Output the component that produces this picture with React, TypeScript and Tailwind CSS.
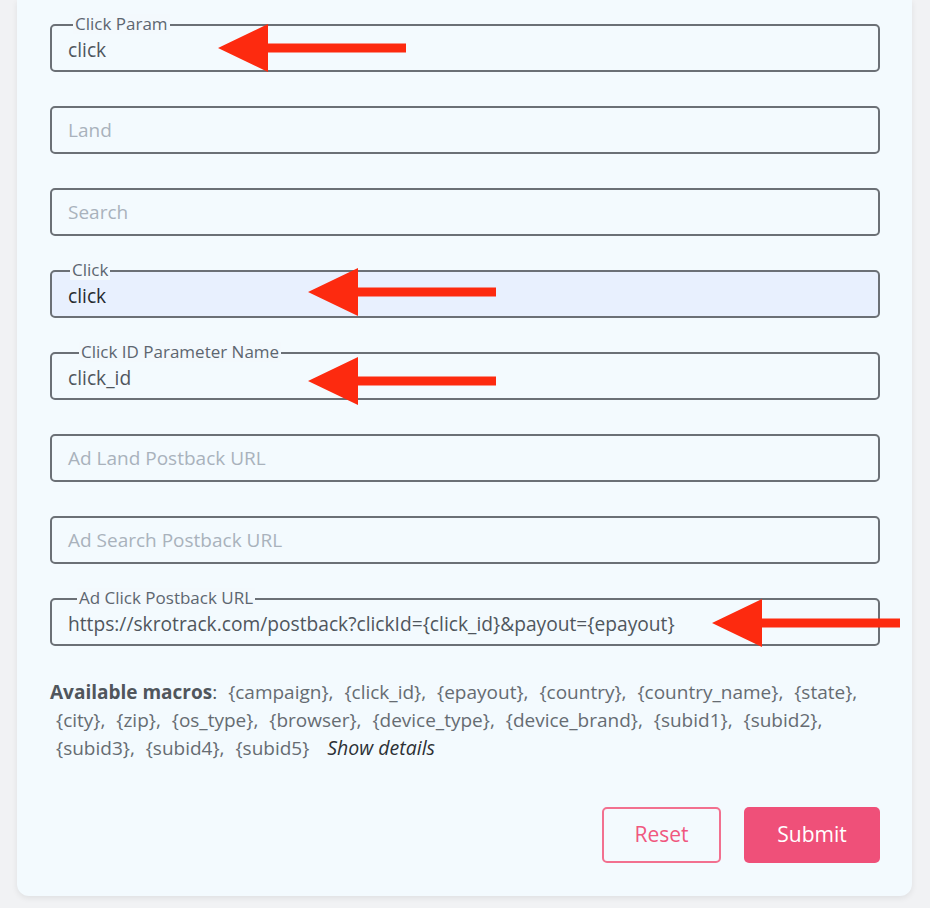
import React from 'react'

type Field = {
  label?: string
  placeholder: string
  value?: string
  autofill?: boolean
  labelLeft: string
}

const FIELDS: Field[] = [
  { label: 'Click Param', placeholder: 'Click Param', value: 'click', labelLeft: 'left-[21px]' },
  { placeholder: 'Land', labelLeft: 'left-[18px]' },
  { placeholder: 'Search', labelLeft: 'left-[18px]' },
  { label: 'Click', placeholder: 'Click', value: 'click', autofill: true, labelLeft: 'left-[18px]' },
  { label: 'Click ID Parameter Name', placeholder: 'Click ID Parameter Name', value: 'click_id', labelLeft: 'left-[27px]' },
  { placeholder: 'Ad Land Postback URL', labelLeft: 'left-[18px]' },
  { placeholder: 'Ad Search Postback URL', labelLeft: 'left-[18px]' },
  {
    label: 'Ad Click Postback URL',
    placeholder: 'Ad Click Postback URL',
    value: 'https://skrotrack.com/postback?clickId={click_id}&payout={epayout}',
    labelLeft: 'left-[25px]',
  },
]

const MACROS = [
  'campaign', 'click_id', 'epayout', 'country', 'country_name', 'state',
  'city', 'zip', 'os_type', 'browser', 'device_type', 'device_brand',
  'subid1', 'subid2', 'subid3', 'subid4', 'subid5',
]

function OutlinedField({ field }: { field: Field }) {
  return (
    <div
      className={`relative h-12 rounded-[5px] border-2 border-[#6b7076] flex items-center pl-[16px] ${
        field.autofill ? 'bg-[#e8f0fe]' : 'bg-transparent'
      }`}
    >
      {field.label && (
        <span
          className={`absolute -top-[12px] ${field.labelLeft} px-[2px] bg-[#f3f9fd] text-[17px] leading-[20px] text-[#5d6670]`}
        >
          {field.label}
        </span>
      )}
      {field.value ? (
        <span className={`text-[19.2px] leading-none mt-[4px] ${field.autofill ? 'text-[#262a2e]' : 'text-[#4f565d]'}`}>
          {field.value}
        </span>
      ) : (
        <span className="text-[19px] leading-none mt-[1px] text-[#a9b2bc]">{field.placeholder}</span>
      )}
    </div>
  )
}

function Arrow({ pos }: { pos: string }) {
  return (
    <svg className={`absolute ${pos}`} width="188" height="48" viewBox="0 0 188 48">
      <polygon
        points="0,24 50,0 50,19.5 188,19.5 188,28.5 50,28.5 50,48"
        fill="#fd2a0f"
      />
    </svg>
  )
}

export default function App() {
  return (
    <div
      className="relative min-h-[908px] bg-[#f1f2f4] overflow-hidden"
      style={{ fontFamily: '"Open Sans", "Noto Sans", sans-serif' }}
    >
      <div className="ml-[17px] w-[895px] bg-[#f3fafe] rounded-b-xl shadow-[0_2px_6px_rgba(0,0,0,0.08)] pt-6 pl-[33px] pr-[32px] pb-[33px]">
        <div className="flex flex-col gap-[34px]">
          {FIELDS.map((f, i) => (
            <OutlinedField key={i} field={f} />
          ))}
        </div>

        <p className="mt-[33px] text-[19px] leading-[27.5px] text-[#666c72]">
          <span className="font-bold text-[#50565c]">Available macros</span>
          <span className="text-[#50565c]">:</span>{' '}
          {MACROS.map((m, i) => (
            <React.Fragment key={m}>
              <span className="ml-[6px]">
                {`{${m}}`}
                {i < MACROS.length - 1 ? ',' : ''}
              </span>{' '}
            </React.Fragment>
          ))}
          <span className="ml-[13px] italic text-[#2c3035] text-[19.5px]">Show details</span>
        </p>

        <div className="mt-[44px] flex justify-end gap-[23px]">
          <button className="w-[119px] h-14 rounded-[5px] border-2 border-[#f2708f] text-[#f0577e] text-[21px]">
            Reset
          </button>
          <button className="w-[136px] h-14 rounded-[5px] bg-[#ef5079] text-white text-[21px]">
            Submit
          </button>
        </div>
      </div>

      <Arrow pos="left-[218px] top-[24px]" />
      <Arrow pos="left-[308px] top-[268px]" />
      <Arrow pos="left-[308px] top-[357px]" />
      <Arrow pos="left-[712px] top-[599px]" />
    </div>
  )
}
